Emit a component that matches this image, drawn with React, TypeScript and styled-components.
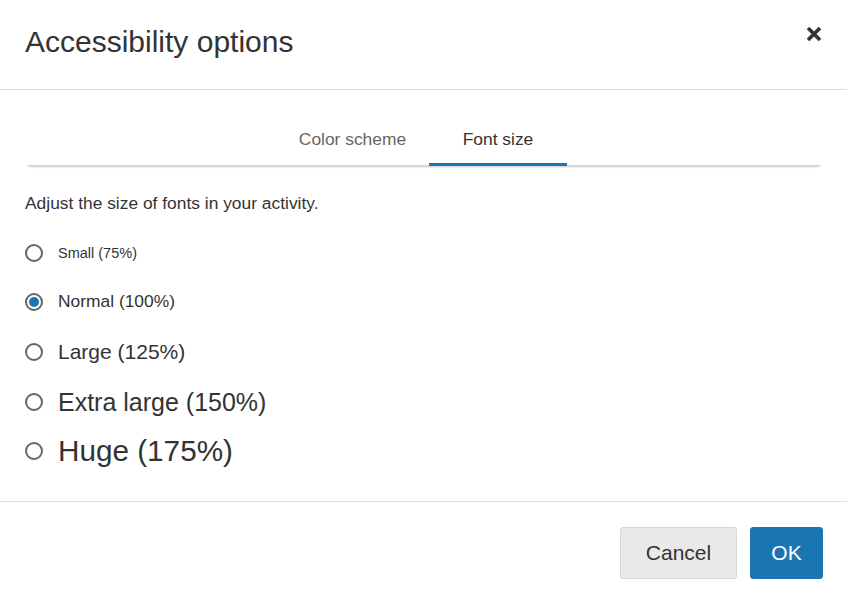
import { FunctionComponent, useState } from "react";
import styled, { createGlobalStyle } from "styled-components";

const GlobalStyle = createGlobalStyle`
  html, body {
    margin: 0;
    padding: 0;
    background: #ffffff;
  }
  body {
    font-family: "Liberation Sans", Arial, sans-serif;
    color: #333333;
  }
`;

const DialogStyled = styled.div`
  width: 847px;
  height: 603px;
  display: flex;
  flex-direction: column;
  background: #ffffff;
`;

const HeaderStyled = styled.div`
  height: 90px;
  display: flex;
  align-items: center;
  justify-content: space-between;
  padding: 0 24px 0 25px;
  border-bottom: 1px solid #dddddd;
  box-sizing: border-box;
`;

const TitleStyled = styled.h1`
  margin: 0 0 5px 0;
  font-size: 30px;
  font-weight: normal;
  color: #333333;
`;

const CloseButtonStyled = styled.button`
  border: none;
  background: none;
  padding: 0;
  margin: 0 0 22px 0;
  width: 18px;
  height: 18px;
  cursor: pointer;
  display: flex;
`;

const BodyStyled = styled.div`
  flex: 1;
  padding: 0 26px 0 25px;
`;

const TabBarStyled = styled.div`
  margin: 25px 0 0 2px;
  display: flex;
  justify-content: center;
  padding-right: 17px;
  box-shadow: 0 3px 2px -2px rgba(0, 0, 0, 0.22);
  border-bottom: 1px solid #d4d4d4;
`;

const TabStyled = styled.button<{ $active?: boolean; $width: number; $shift?: number }>`
  width: ${(p) => p.$width}px;
  height: 51px;
  border: none;
  background: none;
  font-family: inherit;
  font-size: 17.4px;
  color: ${(p) => (p.$active ? "#333333" : "#666666")};
  border-bottom: 3px solid ${(p) => (p.$active ? "#1a75b3" : "transparent")};
  margin-bottom: -1px;
  padding: 0 0 0 ${(p) => p.$shift || 0}px;
  cursor: pointer;
`;

const DescriptionStyled = styled.p`
  margin: 27px 0 14px 0;
  font-size: 17.4px;
  color: #333333;
`;

const OptionListStyled = styled.div`
  display: flex;
  flex-direction: column;
`;

const OptionStyled = styled.label<{ $height: number }>`
  display: flex;
  align-items: center;
  height: ${(p) => p.$height}px;
  cursor: pointer;
`;

const RadioStyled = styled.span<{ $checked?: boolean }>`
  width: 18px;
  height: 18px;
  box-sizing: border-box;
  border-radius: 50%;
  border: 2px solid #666666;
  margin-right: 15px;
  flex-shrink: 0;
  display: flex;
  align-items: center;
  justify-content: center;

  &::after {
    content: "";
    width: 10px;
    height: 10px;
    border-radius: 50%;
    background: ${(p) => (p.$checked ? "#1a75b3" : "transparent")};
  }
`;

const OptionTextStyled = styled.span<{ $size: number }>`
  font-size: ${(p) => p.$size}px;
  color: #333333;
`;

const FooterStyled = styled.div`
  height: 102px;
  border-top: 1px solid #dddddd;
  box-sizing: border-box;
  display: flex;
  justify-content: flex-end;
  align-items: flex-start;
  gap: 13px;
  padding: 25px 24px 0 0;
`;

const ButtonStyled = styled.button<{ $primary?: boolean; $width: number }>`
  width: ${(p) => p.$width}px;
  height: 52px;
  border-radius: 3px;
  font-family: inherit;
  font-size: 21px;
  cursor: pointer;
  border: 1px solid ${(p) => (p.$primary ? "#1a75b3" : "#d6d6d6")};
  background: ${(p) => (p.$primary ? "#1a75b3" : "#e9e9e9")};
  color: ${(p) => (p.$primary ? "#ffffff" : "#333333")};
`;

const OPTIONS = [
  { label: "Small (75%)", size: 14.5, height: 49 },
  { label: "Normal (100%)", size: 17.4, height: 49 },
  { label: "Large (125%)", size: 21, height: 51 },
  { label: "Extra large (150%)", size: 25, height: 50 },
  { label: "Huge (175%)", size: 29.7, height: 47 },
];

const App: FunctionComponent = () => {
  const [selected, setSelected] = useState(1);
  const [tab, setTab] = useState(1);

  return (
    <DialogStyled>
      <GlobalStyle />
      <HeaderStyled>
        <TitleStyled>Accessibility options</TitleStyled>
        <CloseButtonStyled aria-label="Close">
          <svg width="18" height="18" viewBox="0 0 18 18">
            <path
              d="M3 3 L15 15 M15 3 L3 15"
              stroke="#333333"
              strokeWidth="3.6"
              strokeLinecap="butt"
            />
          </svg>
        </CloseButtonStyled>
      </HeaderStyled>
      <BodyStyled>
        <TabBarStyled>
          <TabStyled $width={165} $shift={12} $active={tab == 0} onClick={() => setTab(0)}>
            Color scheme
          </TabStyled>
          <TabStyled $width={138} $active={tab == 1} onClick={() => setTab(1)}>
            Font size
          </TabStyled>
        </TabBarStyled>
        <DescriptionStyled>Adjust the size of fonts in your activity.</DescriptionStyled>
        <OptionListStyled>
          {OPTIONS.map((option, index) => (
            <OptionStyled
              key={option.label}
              $height={option.height}
              onClick={() => setSelected(index)}
            >
              <RadioStyled $checked={selected == index} />
              <OptionTextStyled $size={option.size}>{option.label}</OptionTextStyled>
            </OptionStyled>
          ))}
        </OptionListStyled>
      </BodyStyled>
      <FooterStyled>
        <ButtonStyled $width={117}>Cancel</ButtonStyled>
        <ButtonStyled $width={73} $primary>
          OK
        </ButtonStyled>
      </FooterStyled>
    </DialogStyled>
  );
};

export default App;
